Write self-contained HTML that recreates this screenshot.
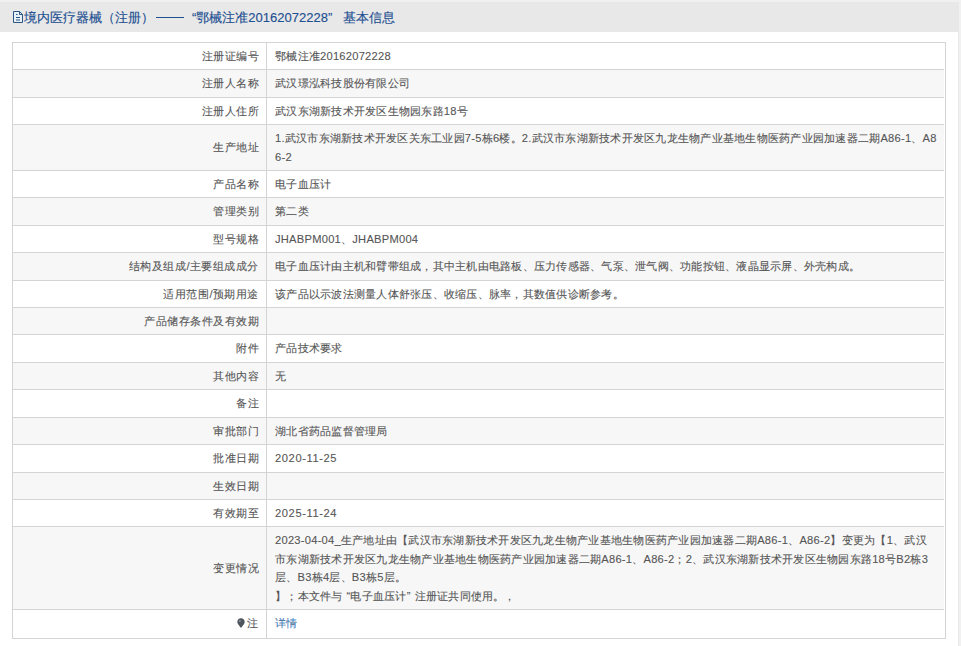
<!DOCTYPE html>
<html><head><meta charset="utf-8">
<style>
html,body{margin:0;padding:0;background:#fff;}
body{font-family:"Liberation Sans",sans-serif;font-size:11.15px;color:#333;width:961px;height:646px;overflow:hidden;position:relative;}
.hd{position:absolute;z-index:2;left:0;top:0;width:959px;height:32px;background:#e8e8e8;border-top:0;}
.hd:before{content:"";position:absolute;left:0;top:0;width:959px;height:2px;background:#f0f0f0;}
.hd .t{position:absolute;left:24px;top:9px;-webkit-text-stroke:0.15px #1e5092;font-size:13px;line-height:18px;color:#1e5092;white-space:nowrap;}
.hd .dash{display:inline-block;width:28px;height:1.3px;background:#1e5092;vertical-align:4px;margin-left:2px;}
.hd .q1{margin-left:8px;}
.hd .q2{margin-right:11px;}
.hd svg{position:absolute;left:13px;top:11px;}
.ob{position:absolute;left:12px;top:42px;width:932px;height:595px;border:1px solid #d4d4d4;}
.rs{position:absolute;left:958px;top:0;width:2px;height:646px;background:#f1f1f1;border-left:1px solid #e7e7e7;}
table{position:absolute;left:12px;top:42px;width:932px;border-collapse:collapse;table-layout:fixed;}
td{letter-spacing:0.25px;border:1px solid #d4d4d4;padding:4px 7px 4px 8px;line-height:18.4px;vertical-align:middle;white-space:nowrap;overflow:hidden;}
td.l{width:238px;letter-spacing:0.5px;padding-right:7px;text-align:right;color:#555;-webkit-text-stroke:0.1px #555;}
td.v{border-right:0;color:#555;-webkit-text-stroke:0.1px #555;padding-left:8px;}
tr:nth-child(even) td{background:#f7f7f7;}
tr.last td{height:19.9px;padding-top:3px;padding-bottom:5px;}
tr.last td.l{padding-right:8px;}
.pin{vertical-align:-1px;margin-right:2px;}
.dt{letter-spacing:0.6px;}
a{color:#3d8bd6;text-decoration:none;}
</style></head><body>
<div class="hd">
<svg width="10" height="12" viewBox="0 0 10 12"><path d="M0.5 0.5H6.5L9.5 3.5V11.5H0.5Z" fill="#e8f0f8" stroke="#2a5585" stroke-width="1"/><path d="M6.5 0.5V3.5H9.5" fill="none" stroke="#2a5585" stroke-width="1"/><path d="M3 3.5H4.5M3 6.5H7M3 9H7" stroke="#2a5585" stroke-width="1"/></svg>
<div class="t">境内医疗器械（注册）<span class="dash"></span><span class="q1">“</span>鄂械注准20162072228<span class="q2">”</span>基本信息</div>
</div>
<div class="rs"></div>
<div class="ob"></div>
<table>
<tr><td class="l">注册证编号</td><td class="v">鄂械注准20162072228</td></tr>
<tr><td class="l">注册人名称</td><td class="v">武汉璟泓科技股份有限公司</td></tr>
<tr><td class="l">注册人住所</td><td class="v">武汉东湖新技术开发区生物园东路18号</td></tr>
<tr><td class="l">生产地址</td><td class="v">1.武汉市东湖新技术开发区关东工业园7-5栋6楼。2.武汉市东湖新技术开发区九龙生物产业基地生物医药产业园加速器二期A86-1、A8<br>6-2</td></tr>
<tr><td class="l">产品名称</td><td class="v">电子血压计</td></tr>
<tr><td class="l">管理类别</td><td class="v">第二类</td></tr>
<tr><td class="l">型号规格</td><td class="v">JHABPM001、JHABPM004</td></tr>
<tr><td class="l">结构及组成/主要组成成分</td><td class="v">电子血压计由主机和臂带组成，其中主机由电路板、压力传感器、气泵、泄气阀、功能按钮、液晶显示屏、外壳构成。</td></tr>
<tr><td class="l">适用范围/预期用途</td><td class="v">该产品以示波法测量人体舒张压、收缩压、脉率，其数值供诊断参考。</td></tr>
<tr><td class="l">产品储存条件及有效期</td><td class="v"></td></tr>
<tr><td class="l">附件</td><td class="v">产品技术要求</td></tr>
<tr><td class="l">其他内容</td><td class="v">无</td></tr>
<tr><td class="l">备注</td><td class="v"></td></tr>
<tr><td class="l">审批部门</td><td class="v">湖北省药品监督管理局</td></tr>
<tr><td class="l">批准日期</td><td class="v"><span class="dt">2020-11-25</span></td></tr>
<tr><td class="l">生效日期</td><td class="v"></td></tr>
<tr><td class="l">有效期至</td><td class="v"><span class="dt">2025-11-24</span></td></tr>
<tr><td class="l">变更情况</td><td class="v">2023-04-04_生产地址由【武汉市东湖新技术开发区九龙生物产业基地生物医药产业园加速器二期A86-1、A86-2】变更为【1、武汉<br>市东湖新技术开发区九龙生物产业基地生物医药产业园加速器二期A86-1、A86-2；2、武汉东湖新技术开发区生物园东路18号B2栋3<br>层、B3栋4层、B3栋5层。<br>】；本文件与<span style="margin-left:4px">“</span>电子血压计<span style="margin-right:4px">”</span>注册证共同使用。<span style="margin-left:-1px">，</span></td></tr>
<tr class="last"><td class="l"><svg class="pin" width="8" height="10" viewBox="0 0 8 10"><path d="M4 0.3C1.9 0.3 0.3 1.9 0.3 4C0.3 5.9 2.2 7.4 4 9.9C5.8 7.4 7.7 5.9 7.7 4C7.7 1.9 6.1 0.3 4 0.3Z" fill="#4f555c"/><circle cx="2.9" cy="2.9" r="1" fill="#8a9098"/></svg>注</td><td class="v"><a>详情</a></td></tr>
</table>
</body></html>
